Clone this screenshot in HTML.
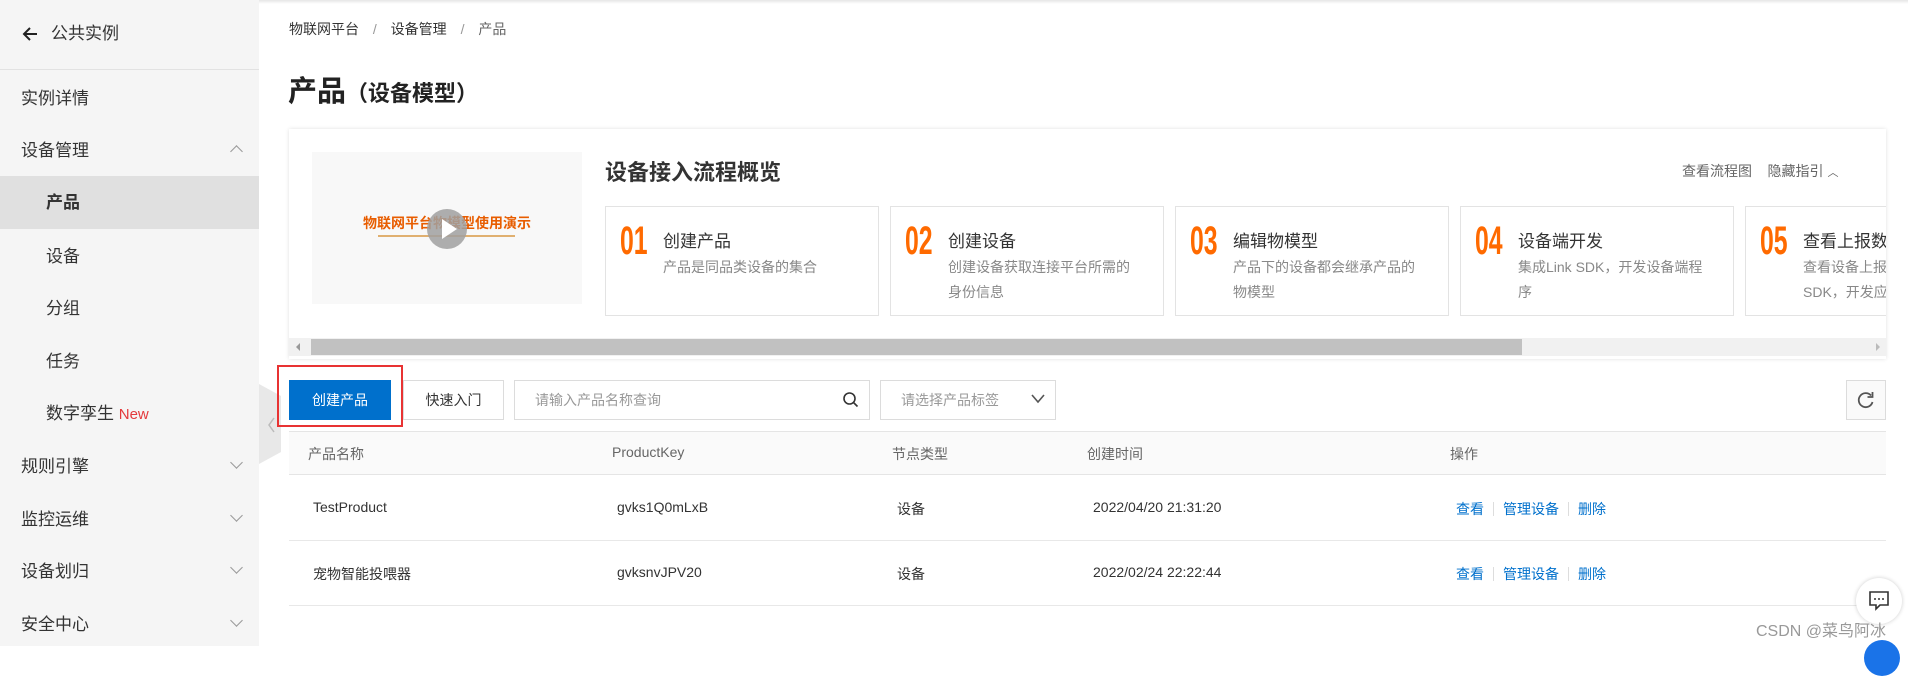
<!DOCTYPE html>
<html><head><meta charset="utf-8"><style>
*{margin:0;padding:0;box-sizing:border-box}
body{width:1908px;height:646px;overflow:hidden;position:relative;background:#fff;font-family:"Liberation Sans","Noto Sans CJK SC",sans-serif;color:#333}
.a{position:absolute;white-space:nowrap}
#side{position:absolute;left:0;top:0;width:259px;height:646px;background:#f5f5f5}
.si{position:absolute;font-size:17px;color:#333;line-height:20px}
.chev{position:absolute;left:232px;width:9px;height:9px;border-right:1.5px solid #999;border-bottom:1.5px solid #999}
.card{position:absolute;top:206px;width:274px;height:110px;border:1px solid #e3e3e3;background:#fff}
.num{position:absolute;left:14px;top:12px;font-family:"Liberation Sans Narrow","Liberation Sans",sans-serif;font-weight:bold;font-size:40px;color:#ff6a00;transform:scaleX(.62);transform-origin:left top}
.ct{position:absolute;left:57px;top:20px;font-size:17px;color:#333}
.cd{position:absolute;left:57px;top:48px;font-size:14px;color:#888;line-height:25px;width:186px;white-space:normal}
.th{position:absolute;top:444px;font-size:14px;color:#666}
.td{position:absolute;font-size:14px;color:#333}
.lk{color:#0070cc}
.sep{display:inline-block;width:1px;height:14px;background:#ddd;margin:0 9px;vertical-align:-2px}
</style></head><body>
<div class="a" style="left:0;top:0;width:1908px;height:4px;background:linear-gradient(#e6e6e6,#fff)"></div>
<div id="side">
 <svg class="a" style="left:21px;top:26px" width="18" height="16"><path d="M16 8 H3 M9 2 L3 8 L9 14" stroke="#222" stroke-width="2" fill="none"/></svg>
 <div class="si" style="left:51px;top:24px">公共实例</div>
 <div style="position:absolute;left:0;top:69px;width:259px;height:1px;background:#e2e2e2"></div>
 <div class="si" style="left:21px;top:89px">实例详情</div>
 <div class="si" style="left:21px;top:141px">设备管理</div>
 <div class="chev" style="top:147px;transform:rotate(-135deg)"></div>
 <div style="position:absolute;left:0;top:176px;width:259px;height:53px;background:#e0e0e0"></div>
 <div class="si" style="left:46px;top:193px;font-weight:bold">产品</div>
 <div class="si" style="left:46px;top:247px">设备</div>
 <div class="si" style="left:46px;top:299px">分组</div>
 <div class="si" style="left:46px;top:352px">任务</div>
 <div class="si" style="left:46px;top:404px">数字孪生 <span style="color:#e4393c;font-size:15px">New</span></div>
 <div class="si" style="left:21px;top:457px">规则引擎</div><div class="chev" style="top:458px;transform:rotate(45deg)"></div>
 <div class="si" style="left:21px;top:510px">监控运维</div><div class="chev" style="top:511px;transform:rotate(45deg)"></div>
 <div class="si" style="left:21px;top:562px">设备划归</div><div class="chev" style="top:563px;transform:rotate(45deg)"></div>
 <div class="si" style="left:21px;top:615px">安全中心</div><div class="chev" style="top:616px;transform:rotate(45deg)"></div>
</div>
<svg class="a" style="left:259px;top:384px" width="24" height="80"><path d="M0 0 L22 12 L22 68 L0 80Z" fill="#e8e8e8"/><path d="M15 34 L10 41 L15 48" stroke="#bbb" stroke-width="1.5" fill="none"/></svg>

<div class="a" style="left:289px;top:19px;font-size:14px;color:#333">物联网平台 <span style="color:#999;margin:0 10px">/</span> 设备管理 <span style="color:#999;margin:0 10px">/</span> <span style="color:#666">产品</span></div>
<div class="a" style="left:288px;top:68px;font-size:29px;font-weight:bold;color:#222">产品<span style="font-size:22px">（设备模型）</span></div>

<div class="a" style="left:289px;top:129px;width:1597px;height:230px;background:#fff;box-shadow:0 0 4px rgba(0,0,0,.12);overflow:hidden">
 <div class="a" style="left:23px;top:23px;width:270px;height:152px;background:#f8f8f8"></div>
 <div class="a" style="left:74px;top:84px;font-size:14px;font-weight:bold;color:#e85d00">物联网平台物模型使用演示</div>
 <div class="a" style="left:89px;top:106px;width:137px;height:2px;background:#e0b070"></div>
 <div class="a" style="left:138px;top:80px;width:40px;height:40px;border-radius:50%;background:rgba(160,160,160,.85)"></div>
 <svg class="a" style="left:151px;top:89px" width="20" height="22"><path d="M2 1 L17 11 L2 21Z" fill="#fff"/></svg>
 <div class="a" style="left:316px;top:26px;font-size:22px;font-weight:bold;color:#333">设备接入流程概览</div>
 <div class="a" style="left:1393px;top:32px;font-size:14px;color:#666">查看流程图&nbsp;&nbsp;&nbsp;&nbsp;隐藏指引 <span style="font-size:11px">︿</span></div>
 <div class="card" style="left:316px;top:77px"><div class="num">01</div><div class="ct">创建产品</div><div class="cd">产品是同品类设备的集合</div></div>
 <div class="card" style="left:601px;top:77px"><div class="num">02</div><div class="ct">创建设备</div><div class="cd">创建设备获取连接平台所需的身份信息</div></div>
 <div class="card" style="left:886px;top:77px"><div class="num">03</div><div class="ct">编辑物模型</div><div class="cd">产品下的设备都会继承产品的物模型</div></div>
 <div class="card" style="left:1171px;top:77px"><div class="num">04</div><div class="ct">设备端开发</div><div class="cd">集成Link SDK，开发设备端程序</div></div>
 <div class="card" style="left:1456px;top:77px"><div class="num">05</div><div class="ct">查看上报数据</div><div class="cd">查看设备上报数据，集成<br>SDK，开发应用</div></div>
 <div class="a" style="left:0;top:209px;width:1597px;height:18px;background:#f1f1f1"></div>
 <div class="a" style="left:22px;top:210px;width:1211px;height:16px;background:#c1c1c1"></div>
 <svg class="a" style="left:4px;top:213px" width="10" height="10"><path d="M7 1 L3 5 L7 9Z" fill="#999"/></svg>
 <svg class="a" style="left:1584px;top:213px" width="10" height="10"><path d="M3 1 L7 5 L3 9Z" fill="#bbb"/></svg>
</div>

<div class="a" style="left:277px;top:365px;width:126px;height:62px;border:2px solid #e83333"></div>
<div class="a" style="left:289px;top:380px;width:102px;height:40px;background:#0070cc;color:#fff;font-size:14px;line-height:40px;text-align:center">创建产品</div>
<div class="a" style="left:403px;top:380px;width:101px;height:40px;border:1px solid #dcdcdc;font-size:14px;line-height:38px;text-align:center">快速入门</div>
<div class="a" style="left:514px;top:380px;width:356px;height:40px;border:1px solid #dcdcdc;font-size:14px;line-height:38px;padding-left:20px;color:#999">请输入产品名称查询</div>
<svg class="a" style="left:842px;top:391px" width="18" height="18"><circle cx="7.5" cy="7.5" r="5.5" stroke="#333" stroke-width="1.6" fill="none"/><path d="M11.5 11.5 L15.5 15.5" stroke="#333" stroke-width="1.6"/></svg>
<div class="a" style="left:880px;top:380px;width:176px;height:40px;border:1px solid #dcdcdc;font-size:14px;line-height:38px;padding-left:20px;color:#999">请选择产品标签</div>
<svg class="a" style="left:1030px;top:393px" width="16" height="12"><path d="M2 2 L8 9 L14 2" stroke="#555" stroke-width="1.6" fill="none"/></svg>
<div class="a" style="left:1846px;top:380px;width:40px;height:40px;border:1px solid #dcdcdc;background:#fafafa"></div>
<svg class="a" style="left:1856px;top:390px" width="20" height="20"><path d="M15 5.5 A7 7 0 1 0 16.5 12" stroke="#555" stroke-width="1.8" fill="none"/><path d="M16.5 2 L16.5 7 L11.5 7" stroke="#555" stroke-width="1.8" fill="none"/></svg>

<div class="a" style="left:289px;top:431px;width:1597px;height:44px;background:#fafafa;border-top:1px solid #e5e5e5;border-bottom:1px solid #e5e5e5"></div>
<div class="th" style="left:308px">产品名称</div><div class="th" style="left:612px">ProductKey</div><div class="th" style="left:892px">节点类型</div><div class="th" style="left:1087px">创建时间</div><div class="th" style="left:1450px">操作</div>
<div class="a" style="left:289px;top:540px;width:1597px;height:1px;background:#e8e8e8"></div>
<div class="a" style="left:289px;top:605px;width:1597px;height:1px;background:#e8e8e8"></div>
<div class="td" style="left:313px;top:499px">TestProduct</div><div class="td" style="left:617px;top:499px">gvks1Q0mLxB</div><div class="td" style="left:897px;top:499px">设备</div><div class="td" style="left:1093px;top:499px">2022/04/20 21:31:20</div>
<div class="td lk" style="left:1456px;top:499px">查看<span class="sep"></span>管理设备<span class="sep"></span>删除</div>
<div class="td" style="left:313px;top:564px">宠物智能投喂器</div><div class="td" style="left:617px;top:564px">gvksnvJPV20</div><div class="td" style="left:897px;top:564px">设备</div><div class="td" style="left:1093px;top:564px">2022/02/24 22:22:44</div>
<div class="td lk" style="left:1456px;top:564px">查看<span class="sep"></span>管理设备<span class="sep"></span>删除</div>

<div class="a" style="left:1856px;top:578px;width:46px;height:46px;border-radius:50%;background:#fff;box-shadow:0 0 4px rgba(0,0,0,.2)"></div>
<svg class="a" style="left:1868px;top:590px" width="22" height="22"><path d="M2 2 H20 V15 H12 L8 19 V15 H2Z" stroke="#333" stroke-width="1.6" fill="none"/><circle cx="7" cy="9" r="1" fill="#333"/><circle cx="11" cy="9" r="1" fill="#333"/><circle cx="15" cy="9" r="1" fill="#333"/></svg>
<div class="a" style="left:1864px;top:640px;width:36px;height:36px;border-radius:50%;background:#1a73e8"></div>
<div class="a" style="left:1756px;top:617px;font-size:16px;color:#999">CSDN @菜鸟阿冰</div>
</body></html>
